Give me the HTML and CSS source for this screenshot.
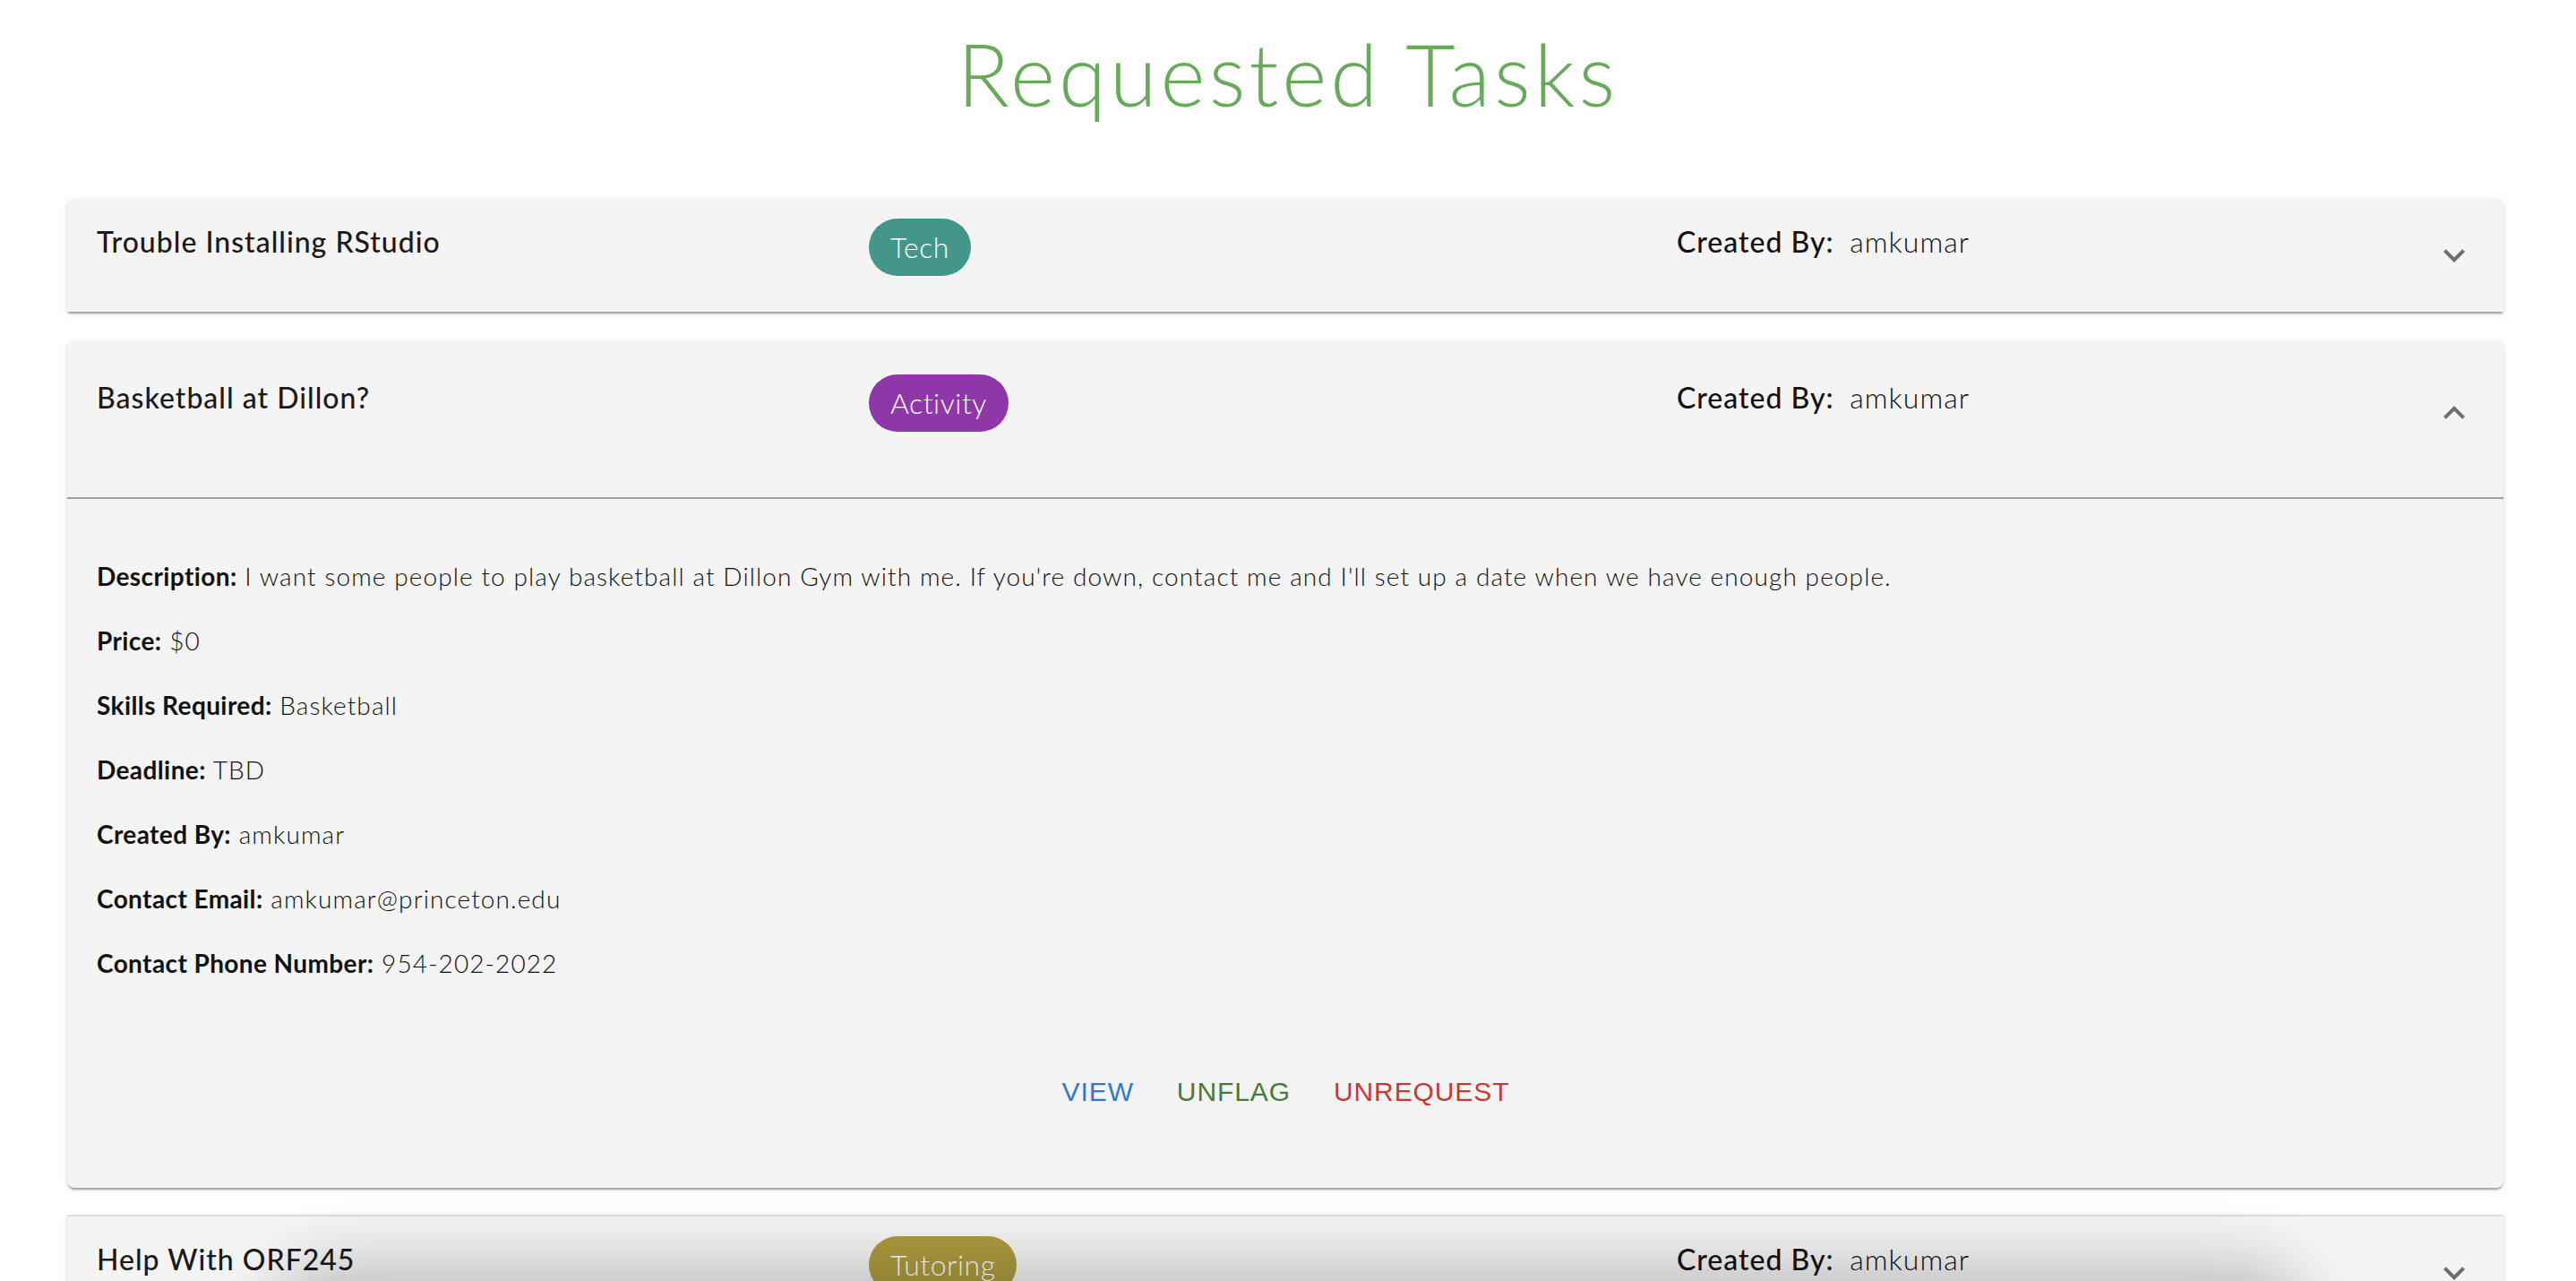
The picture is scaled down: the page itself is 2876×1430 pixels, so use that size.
FILE: index.html
```html
<!DOCTYPE html><html>
<head>
<title>Requested Tasks</title>
<link rel="stylesheet" href="styles.css">
</head>
<body>

<h1 class="page-title">Requested Tasks</h1>

<div class="task-list">
	<div class="task">
		<div class="task-summary">
			<div class="task-cols">
				<div class="task-name">Trouble Installing RStudio</div>
				<div><span class="chip chip-tech">Tech</span></div>
				<div class="creator"><span class="creator-label">Created By:</span> amkumar</div>
			</div>
			<svg class="expand-icon" viewBox="0 0 24 24"><path d="M16.59 8.59L12 13.17 7.41 8.59 6 10l6 6 6-6z"/></svg>
		</div>
	</div>

	<div class="task expanded">
		<div class="task-summary">
			<div class="task-cols">
				<div class="task-name">Basketball at Dillon?</div>
				<div><span class="chip chip-activity">Activity</span></div>
				<div class="creator"><span class="creator-label">Created By:</span> amkumar</div>
			</div>
			<svg class="expand-icon" viewBox="0 0 24 24"><path d="M16.59 8.59L12 13.17 7.41 8.59 6 10l6 6 6-6z"/></svg>
		</div>
		<div class="task-details">
			<p><b>Description:</b> I want some people to play basketball at Dillon Gym with me. If you're down, contact me and I'll set up a date when we have enough people.</p>
			<p><b>Price:</b> $0</p>
			<p><b>Skills Required:</b> Basketball</p>
			<p><b>Deadline:</b> TBD</p>
			<p><b>Created By:</b> amkumar</p>
			<p><b>Contact Email:</b> amkumar@princeton.edu</p>
			<p><b>Contact Phone Number:</b> 954-202-2022</p>
			<div class="task-actions">
				<button class="btn btn-view">View</button>
				<button class="btn btn-unflag">Unflag</button>
				<button class="btn btn-unrequest">Unrequest</button>
			</div>
		</div>
	</div>

	<div class="task">
		<div class="task-summary">
			<div class="task-cols">
				<div class="task-name">Help With ORF245</div>
				<div><span class="chip chip-tutoring">Tutoring</span></div>
				<div class="creator"><span class="creator-label">Created By:</span> amkumar</div>
			</div>
			<svg class="expand-icon" viewBox="0 0 24 24"><path d="M16.59 8.59L12 13.17 7.41 8.59 6 10l6 6 6-6z"/></svg>
		</div>
	</div>
</div>

<div class="bottom-shadow"></div>

</body></html>
```

FILE: styles.css
```css
body {
	margin: 0;
	background: #fff;
	font-family: "Lato", "Open Sans", sans-serif;
	color: #1a1a1a;
	overflow: hidden;
}

.page-title {
	margin: 26px 0 84px;
	font-size: 96px;
	line-height: 112px;
	font-weight: 300;
	letter-spacing: 4px;
	text-align: center;
	color: #66aa5a;
}

.task-list {margin: 0 81px 0 75px;}

.task {
	background: #f4f4f4;
	box-shadow: 0 4px 2px -2px rgba(0,0,0,.2), 0 2px 2px 0 rgba(0,0,0,.14), 0 2px 6px 0 rgba(0,0,0,.12);
}
.task:first-child {border-radius: 8px 8px 0 0;}
.task.expanded {margin: 32px 0 30px; border-radius: 8px;}
.task.expanded + .task {border-top: 2px solid #dcdcdc;}

.task-summary {
	display: flex;
	height: 126px;
	padding: 0 31px 0 33px;
	box-sizing: border-box;
}
.expanded .task-summary {height: 177px; border-bottom: 2px solid #9e9e9e;}

.task-cols {
	flex: 1;
	display: grid;
	grid-template-columns: 862px 902px 1fr;
	align-items: start;
	padding-top: 24px;
	font-size: 32px;
	line-height: 48px;
	letter-spacing: 1px;
}
.expanded .task-cols {padding-top: 40px;}

.task-name {font-weight: 500;}
.creator {font-weight: 300; color: #111;}
.creator-label {font-weight: 500; margin-right: 8px;}

.chip {
	display: inline-block;
	height: 64px;
	line-height: 64px;
	padding: 0 24px;
	margin-top: -2px;
	border-radius: 32px;
	color: #fff;
	font-size: 32px;
	font-weight: 300;
	letter-spacing: .5px;
}
.chip-tech {background: #43968a;}
.chip-activity {background: #8f37a8;}
.chip-tutoring {background: #ad9b3f;}

.expand-icon {
	width: 48px;
	height: 48px;
	align-self: center;
	fill: #6e6e6e;
}
.expanded .expand-icon {transform: rotate(180deg); margin-bottom: 14px;}

.task-details {
	padding: 36px 32px 0 33px;
	font-size: 28px;
	line-height: 44px;
	font-weight: 300;
	letter-spacing: 1.1px;
	color: #111;
}
.task-details p {margin: 28px 0;}
.task-details b {font-weight: 700; letter-spacing: .4px;}

.task-actions {
	display: flex;
	justify-content: center;
	gap: 16px;
	padding: 56px 0 69px;
}

.btn {
	background: none;
	border: 0;
	padding: 12px 16px;
	font-family: "Liberation Sans", Arial, sans-serif;
	font-size: 30px;
	line-height: 52px;
	letter-spacing: .03em;
	text-transform: uppercase;
}
.btn-view {color: #3277d1;}
.btn-unflag {color: #437d3a;}
.btn-unrequest {color: #c73a34;}

.bottom-shadow {
	position: fixed;
	left: 320px;
	right: 320px;
	bottom: -100px;
	height: 100px;
	border-radius: 50px;
	background: #222;
	box-shadow: 0 0 70px 20px rgba(0,0,0,.22);
}
```
